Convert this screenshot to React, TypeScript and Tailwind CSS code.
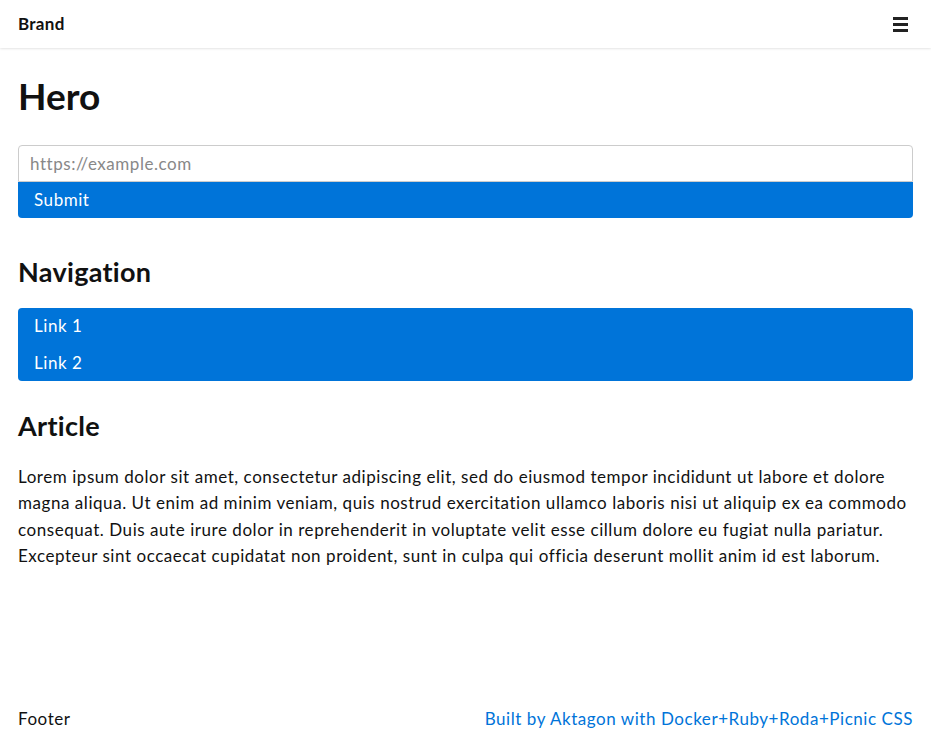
export default function App() {
  const links = ['Link 1', 'Link 2']

  return (
    <div className="flex min-h-screen flex-col bg-white font-['Lato','Noto_Sans',sans-serif] text-[17px] tracking-[0.55px] text-[#111]">
      <nav className="flex h-[48px] items-center justify-between px-[18px] shadow-[0_0_3px_rgba(0,0,0,0.2)]">
        <a href="#" className="text-[17px] font-bold tracking-[0.3px] text-[#111]">
          Brand
        </a>
        <button aria-label="Menu" className="flex flex-col gap-[3px] pr-[5px]">
          <span className="block h-[3px] w-[15px] bg-[#222]" />
          <span className="block h-[3px] w-[15px] bg-[#222]" />
          <span className="block h-[3px] w-[15px] bg-[#222]" />
        </button>
      </nav>

      <main className="flex flex-col px-[18px]">
        <h1 className="mt-[26px] text-[37px] font-bold leading-[44px] tracking-normal">Hero</h1>

        <form className="mt-[27px] flex flex-col" onSubmit={(e) => e.preventDefault()}>
          <input
            type="text"
            placeholder="https://example.com"
            className="h-[37px] rounded-t-[4px] border border-[#ccc] px-[11px] outline-none placeholder:text-[#888]"
          />
          <button
            type="submit"
            className="h-[36px] rounded-b-[4px] bg-[#0074d9] px-[16px] text-left text-white"
          >
            Submit
          </button>
        </form>

        <h2 className="mt-[36px] text-[27px] font-bold leading-[36px] tracking-[0.3px]">Navigation</h2>
        <ul className="mt-[18px] flex flex-col rounded-[4px] bg-[#0074d9] text-white">
          {links.map((l) => (
            <li key={l}>
              <a href="#" className="block h-[36.5px] px-[16px] leading-[36.5px]">
                {l}
              </a>
            </li>
          ))}
        </ul>

        <h2 className="mt-[27px] text-[27px] font-bold leading-[36px] tracking-[0.3px]">Article</h2>
        <p className="mt-[20px] leading-[26.3px]">
          Lorem ipsum dolor sit amet, consectetur adipiscing elit, sed do eiusmod tempor incididunt ut labore et dolore
          <br />
          magna aliqua. Ut enim ad minim veniam, quis nostrud exercitation ullamco laboris nisi ut aliquip ex ea commodo
          <br />
          consequat. Duis aute irure dolor in reprehenderit in voluptate velit esse cillum dolore eu fugiat nulla pariatur.
          <br />
          Excepteur sint occaecat cupidatat non proident, sunt in culpa qui officia deserunt mollit anim id est laborum.
        </p>
      </main>

      <footer className="mt-auto flex items-center justify-between px-[18px] pb-[5px]">
        <span>Footer</span>
        <a href="#" className="text-[#0074d9]">
          Built by Aktagon with Docker+Ruby+Roda+Picnic CSS
        </a>
      </footer>
    </div>
  )
}
